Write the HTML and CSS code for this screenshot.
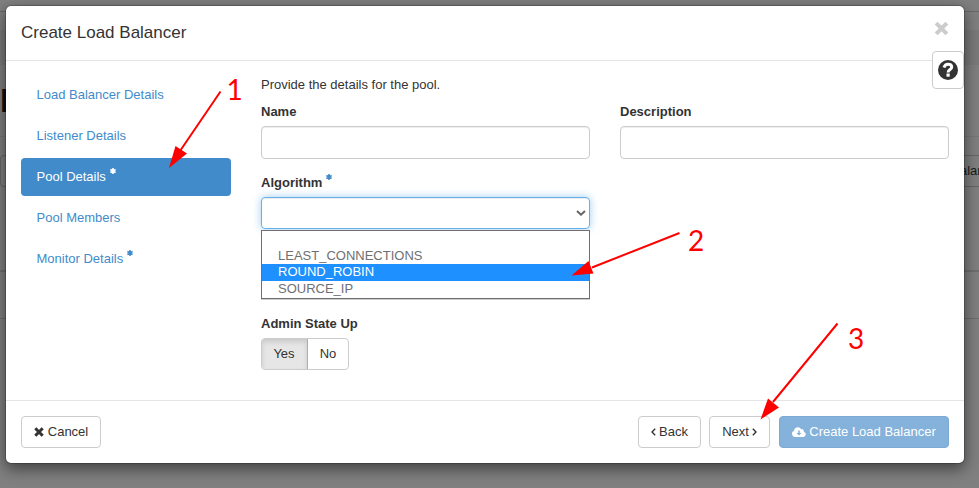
FILE: index.html
```html
<!DOCTYPE html>
<html lang="en">
<head>
<meta charset="utf-8">
<title>Create Load Balancer</title>
<link rel="stylesheet" href="styles.css">
</head>
<body>
<div class="page">
  <div class="page-nav"></div>
  <div class="page-crumb"></div>
  <div class="page-title">L</div>
  <div class="page-tools"><div class="page-btn page-btn-left"></div><div class="page-btn page-btn-right"><span>alan</span></div></div>
  <div class="page-head"></div>
  <div class="page-row"></div>
</div>

<div class="modal">
  <header class="modal-header">
    <h4>Create Load Balancer</h4>
    <svg class="close" viewBox="0 0 14 14"><path d="M2 2 12 12M12 2 2 12"/></svg>
    <button class="help"><svg viewBox="0 0 20 20"><circle cx="10" cy="10" r="10" fill="#333"/><path d="M6 7.500C6.700 5.300 8.200 4.300 10 4.300c2.200 0 3.700 1.200 3.700 2.900 0 2.400-3.600 2.200-3.600 5.200" fill="none" stroke="#fff" stroke-width="3"/><path d="M8.500 13.500h3.200v3.200H8.500z" fill="#fff"/></svg></button>
  </header>
  <div class="modal-body">
    <nav class="steps">
      <a>Load Balancer Details</a>
      <a>Listener Details</a>
      <a class="active">Pool Details<svg class="star" viewBox="0 0 6 6"><path d="M3 0v6M.4 1.500l5.200 3M5.600 1.500l-5.200 3"/></svg></a>
      <a>Pool Members</a>
      <a>Monitor Details<svg class="star" viewBox="0 0 6 6"><path d="M3 0v6M.4 1.500l5.200 3M5.600 1.500l-5.200 3"/></svg></a>
    </nav>
    <section class="form">
      <p>Provide the details for the pool.</p>
      <div class="grid">
        <div class="field"><label>Name</label><div class="input"></div></div>
        <div class="field"><label>Description</label><div class="input"></div></div>
        <div class="field select-field">
          <label>Algorithm<svg class="star" viewBox="0 0 6 6"><path d="M3 0v6M.4 1.500l5.200 3M5.600 1.500l-5.200 3"/></svg></label>
          <div class="input focus"><svg class="caret" viewBox="0 0 10 6"><path d="M1 1l4 3.700L9 1"/></svg></div>
          <ul class="menu"><li></li><li>LEAST_CONNECTIONS</li><li class="selected">ROUND_ROBIN</li><li>SOURCE_IP</li></ul>
        </div>
      </div>
      <div class="field state">
        <label>Admin State Up</label>
        <div class="toggle"><span class="on">Yes</span><span>No</span></div>
      </div>
    </section>
  </div>
  <footer class="modal-footer">
    <button class="btn cancel"><svg class="x-icon" viewBox="0 0 10 10"><path d="M1.300 1.300l7.400 7.400M8.700 1.300l-7.400 7.400"/></svg>Cancel</button>
    <button class="btn back"><svg class="chev" viewBox="0 0 5 8"><path d="M4.200.7 1 4l3.200 3.300"/></svg>Back</button>
    <button class="btn next">Next<svg class="chev" viewBox="0 0 5 8"><path d="M.8.7 4 4 .8 7.300"/></svg></button>
    <button class="btn create"><svg class="cloud" viewBox="0 0 14 10"><path fill="#fff" d="M3.300 10A3.300 3.300 0 0 1 1.900 3.700 3.900 3.900 0 0 1 9.200 2.200a2 2 0 0 1 2.600 2.500A2.700 2.700 0 0 1 11.200 10z"/><path fill="#85b2db" d="M6.200 3.500h1.600V6h1.700L7 8.500 4.500 6h1.700z"/></svg>Create Load Balancer</button>
  </footer>
</div>

<svg class="notes" viewBox="0 0 979 488">
  <g stroke="#f00" stroke-width="2"><path d="M220.500 91.500 180 151M679.500 233 592 267.500M837.500 323.500 773 402"/></g>
  <g fill="#f00"><path d="M169 168 175.500 146 187 153.500zM571.500 275.500 588.500 261 593.500 273.500zM760.500 419.500 768 398.500 779 407.500z"/>
  <text x="226.500" y="100">1</text><text x="688" y="250.500">2</text><text x="848" y="349">3</text></g>
</svg>
</body>
</html>
```
FILE: styles.css
```css
* { box-sizing: border-box; }
body { margin: 0; height: 488px; overflow: hidden; background: #808080; color: #333; font: 13px/18px "Liberation Sans", Arial, sans-serif; }
.page { height: 488px; overflow: hidden; }
.page-nav { height: 12px; border-bottom: 1px solid #686868; }
.page-crumb { height: 35px; margin-top: 18px; background: #7a7a7a; }
.page-title { height: 72px; padding: 18px 0 0; border-bottom: 1px solid #777; font-size: 33px; line-height: 36px; color: #111; font-weight: bold; }
.page-tools { display: flex; justify-content: space-between; margin-top: 18px; }
.page-btn { height: 32px; border: 1px solid #666; line-height: 30px; color: #1a1a1a; overflow: hidden; }
.page-btn-left { width: 60px; border-radius: 4px; }
.page-btn-right { width: 60px; border-right: 0; padding-left: 40px; }
.page-head { height: 85px; border-bottom: 2px solid #6f6f6f; }
.page-row { height: 47px; border-bottom: 1px solid #6f6f6f; }

.modal { position: absolute; left: 5px; top: 5px; width: 960px; height: 459px; display: flex; flex-direction: column; background: #fff; background-clip: padding-box; border: 1px solid rgba(0,0,0,.2); border-radius: 6px; box-shadow: 0 5px 15px rgba(0,0,0,.5); }
.modal-header { position: relative; height: 55px; padding: 17px 15px 0; display: flex; justify-content: space-between; border-bottom: 1px solid #e5e5e5; }
h4 { margin: 0; font-size: 17px; line-height: 19px; font-weight: normal; }
.close { width: 15px; height: 15px; margin-top: -2px; stroke: #ccc; stroke-width: 3.800; }
.help { position: absolute; right: 0; top: 45px; width: 32px; height: 38px; padding: 0; border: 1px solid #ccc; border-radius: 4px; background: #fff; display: grid; place-items: center; }
.help svg { width: 20px; height: 20px; }
.modal-body { flex: 1; display: flex; gap: 30px; padding: 15px 15px 0; }
.steps { width: 210px; display: flex; flex-direction: column; gap: 3px; }
.steps a { height: 38px; padding: 10px 15.500px; color: #428bca; border-radius: 4px; }
.steps .active { background: #428bca; color: #fff; }
.star { width: 6px; height: 6px; margin-left: 4px; vertical-align: 7px; stroke: #428bca; stroke-width: 1.600; }
.active .star { stroke: #fff; }
.form { flex: 1; }
p { margin: 0 0 9px; }
.grid { display: grid; grid-template-columns: 329px 329px; column-gap: 30px; row-gap: 15px; }
.field label { display: block; height: 18px; margin-bottom: 5px; font-weight: bold; }
.input { height: 33px; border: 1px solid #ccc; border-radius: 4px; box-shadow: inset 0 1px 1px rgba(0,0,0,.075); }
.focus { height: 32px; border-color: #66afe9; box-shadow: inset 0 1px 1px rgba(0,0,0,.075), 0 0 8px rgba(102,175,233,.6); display: flex; align-items: center; justify-content: flex-end; padding-right: 3px; }
.caret { width: 10px; height: 6px; fill: none; stroke: #666; stroke-width: 2; }
.select-field { position: relative; }
.menu { position: absolute; left: 0; top: 56px; width: 329px; height: 69px; margin: 0; padding: 0; border: 1px solid #6f6f73; background: #fff; list-style: none; color: #6f6f73; box-shadow: 0 1px 0 #ccc; font-size: 13px; }
.menu li { height: 17px; padding-left: 16px; line-height: 16px; }
.menu li:first-child { height: 16px; }
.menu li:nth-child(2) { line-height: 18px; }
.menu .selected { background: #1e90ff; color: #fff; line-height: 15px; }
.state { margin-top: 86px; }
.toggle { display: inline-flex; height: 32px; border: 1px solid #ccc; border-radius: 4px; overflow: hidden; }
.toggle span { width: 40px; text-align: center; line-height: 30px; }
.toggle .on { width: 46px; padding-right: 1px; background: #e6e6e6; border-right: 1px solid #adadad; box-shadow: inset 0 3px 5px rgba(0,0,0,.125); }
.modal-footer { height: 63px; padding: 15px 15px 0; display: flex; border-top: 1px solid #e5e5e5; }
.btn { height: 32px; padding: 0; border: 1px solid #ccc; border-radius: 4px; background: #fff; color: #333; font: inherit; display: flex; align-items: center; justify-content: center; }
.cancel { width: 80px; margin-right: auto; }
.back { width: 63px; margin-right: 8px; }
.next { width: 61px; margin-right: 9px; }
.create { width: 170px; background: #85b2db; border-color: #7ba9d3; color: #fff; }
.x-icon { width: 10px; height: 10px; margin-right: 4px; stroke: #333; stroke-width: 3; }
.chev { width: 5px; height: 8px; fill: none; stroke: #333; stroke-width: 1.400; margin: 0 3px 0 0; }
.next .chev { margin: 0 0 0 3px; }
.cloud { width: 14px; height: 10px; margin-right: 3px; }
.notes { position: absolute; left: 0; top: 0; width: 979px; height: 488px; pointer-events: none; }
.notes text { font: 28px Lato, sans-serif; }
```
